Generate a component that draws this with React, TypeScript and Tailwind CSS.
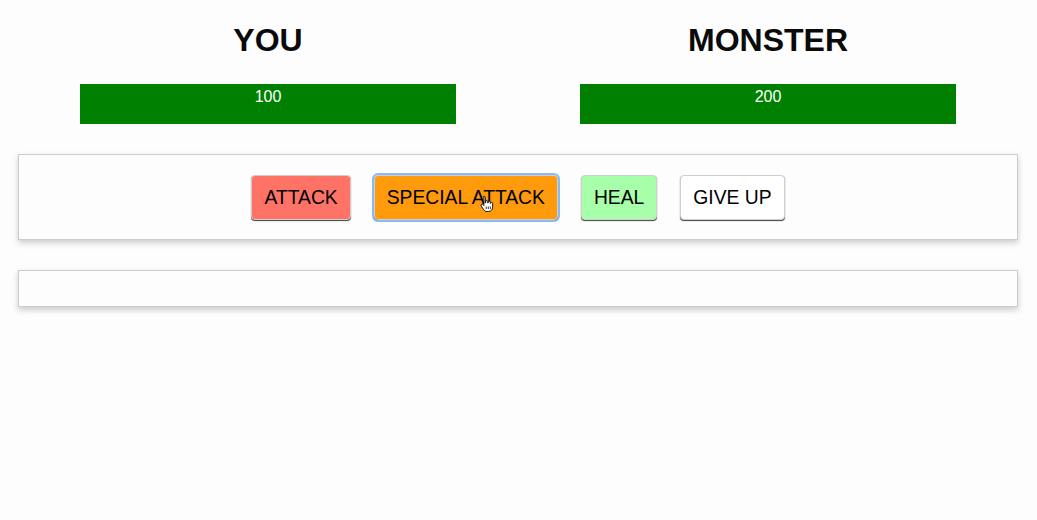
import React from "react";

function HandCursor() {
  return (
    <svg
      width="14"
      height="17"
      viewBox="0 0 14 17"
      className="absolute left-[105px] top-[19px] pointer-events-none"
    >
      <path
        d="M4 1.2c.8 0 1.3.5 1.3 1.3V8h.3V6.6c0-.7.5-1.1 1.1-1.1s1.1.4 1.1 1.1V8h.3V7.2c0-.7.5-1.1 1.1-1.1s1.1.4 1.1 1.1V8.4h.3c0-.6.4-1 1-1s1 .4 1 1v3.8c0 2.4-1.6 4.3-4 4.3H7c-1.4 0-2.3-.5-3.1-1.6L1.2 11c-.4-.6-.3-1.3.2-1.7.5-.4 1.2-.3 1.6.2l.9 1.1V2.5C3 1.7 3.3 1.2 4 1.2z"
        fill="#ffffff"
        stroke="#000000"
        strokeWidth="0.9"
        strokeLinejoin="round"
      />
      <path d="M6.2 11.5v2.6M8.3 11.5v2.6M10.3 11.5v2.6" stroke="#000" strokeWidth="0.8" />
    </svg>
  );
}

export default function App() {
  const font = { fontFamily: '"Liberation Sans", Arial, Helvetica, sans-serif' };
  const btn =
    "h-[45px] px-[12px] pt-[2px] mx-[11.5px] rounded-[4px] border border-[#cfcfcf] text-[19.3px] leading-none text-black shadow-[0_1px_1px_rgba(0,0,0,0.75)]";
  return (
    <div className="min-h-[520px] w-full bg-[#fdfdfd]" style={font}>
      <div className="w-[1000px] ml-[18px] pt-[22px]">
        <div className="grid grid-cols-2">
          {[
            { name: "YOU", hp: 100 },
            { name: "MONSTER", hp: 200 },
          ].map((p) => (
            <div key={p.name} className="flex flex-col items-center">
              <h1 className="text-[32px] leading-[36px] font-bold text-[#0a0a0a]">{p.name}</h1>
              <div className="mt-[26px] w-[376px] h-[40px] bg-[#eee]">
                <div className="h-full w-full bg-[#008000] text-white text-center text-[16px] leading-[24px] pt-[1px]">
                  {p.hp}
                </div>
              </div>
            </div>
          ))}
        </div>
        <div className="mt-[30px] h-[86px] border border-[#cccccc] shadow-[0_3px_6px_#cccccc] flex items-center justify-center">
          <button className={`${btn} bg-[#ff7367]`}>ATTACK</button>
          <button
            className={`${btn} relative bg-[#ff9a0d] outline-[2.5px] outline-solid outline-[#88baf6]`}
          >
            SPECIAL ATTACK
            <HandCursor />
          </button>
          <button className={`${btn} bg-[#a8ffaa]`}>HEAL</button>
          <button className={`${btn} bg-white`}>GIVE UP</button>
        </div>
        <div className="mt-[30px] h-[37px] border border-[#cccccc] shadow-[0_3px_6px_#cccccc]"></div>
      </div>
    </div>
  );
}
